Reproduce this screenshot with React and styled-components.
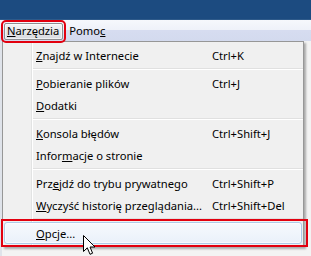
import React from "react";
import styled, {createGlobalStyle} from 'styled-components';

const GlobalStyle = createGlobalStyle`
    html, body {
        margin: 0;
        padding: 0;
        width: 311px;
        height: 256px;
        overflow: hidden;
        background: #eceef2;
    }
`;

const items = [
    [{label: 'Znajdź w Internecie', key: 0, shortcut: 'Ctrl+K'}],
    [
        {label: 'Pobieranie plików', key: 0, shortcut: 'Ctrl+J'},
        {label: 'Dodatki', key: 0},
    ],
    [
        {label: 'Konsola błędów', key: 0, shortcut: 'Ctrl+Shift+J'},
        {label: 'Informacje o stronie', key: 5},
    ],
    [
        {label: 'Przejdź do trybu prywatnego', key: 3, shortcut: 'Ctrl+Shift+P'},
        {label: 'Wyczyść historię przeglądania...', key: 0, shortcut: 'Ctrl+Shift+Del'},
    ],
    [{label: 'Opcje...', key: 0, hot: true}],
];

const Accel = ({text, at}) => (
    <>
        {text.slice(0, at)}
        <u>{text[at]}</u>
        {text.slice(at + 1)}
    </>
);

class App extends React.Component {
    render() {
        return (
            <Screen>
                <GlobalStyle/>
                <TitleBar/>
                <MenuBar>
                    <TopItem $open><Accel text="Narzędzia" at={0}/></TopItem>
                    <TopItem><Accel text="Pomoc" at={4}/></TopItem>
                </MenuBar>
                <Body>
                    <Popup>
                        {items.map((group, g) => (
                            <React.Fragment key={g}>
                                {g > 0 && <Separator/>}
                                {group.map(item => (
                                    <Row key={item.label} $hot={item.hot}>
                                        <span/>
                                        <Label><Accel text={item.label} at={item.key}/></Label>
                                        <Shortcut>{item.shortcut}</Shortcut>
                                    </Row>
                                ))}
                            </React.Fragment>
                        ))}
                    </Popup>
                    <Cursor viewBox="0 0 13 21" width="13" height="21">
                        <path d="M0.5 0.5 L0.5 16.5 L4.3 12.8 L7 19.3 L9.6 18.2 L7 12 L12 12 Z"
                              fill="#fff" stroke="#000" strokeWidth="1" strokeLinejoin="miter"/>
                    </Cursor>
                </Body>
            </Screen>
        );
    }
}

const Screen = styled.div`
    width: 311px;
    height: 256px;
    display: flex;
    flex-direction: column;
    font-family: "Noto Sans", "Open Sans", sans-serif;
    font-size: 11.2px;
    color: #000;
    position: relative;
`;

const TitleBar = styled.div`
    height: 20px;
    flex: none;
    background: #1c4b80;
    border-bottom: 1px solid #2e5a8a;
    box-sizing: border-box;
`;

const MenuBar = styled.div`
    height: 21px;
    flex: none;
    display: flex;
    align-items: center;
    gap: 3px;
    padding: 1px 0 0 4px;
    box-sizing: border-box;
    background: linear-gradient(to bottom, #f6f8fc 0, #eef1f9 50%, #d6dcf0 50%, #d3daee 100%);
    position: relative;
    z-index: 2;
`;

const TopItem = styled.div`
    height: 17px;
    display: flex;
    align-items: center;
    padding: 0 3px 0 2px;
    border: 1px solid transparent;
    border-radius: 2px;
    box-sizing: border-box;
    line-height: 1;
    white-space: nowrap;

    ${({$open}) => $open && `
        border-color: #8d8e92;
        background: linear-gradient(to bottom, #f4f4f5 0, #e6e7ea 50%, #d8dae0 100%);
        box-shadow: inset 0 0 0 1px rgba(255,255,255,0.6);
        outline: 2px solid #e2000f;
        outline-offset: 1px;
    `}
`;

const Body = styled.div`
    flex: 1;
    position: relative;
    padding-left: 2px;
    background: linear-gradient(to right, #dfe3ea 0, #dfe3ea 2px, #f3f3f3 2px);
`;

const Popup = styled.div`
    width: 302px;
    box-sizing: border-box;
    border: 1px solid #979797;
    padding: 2px 0;
    background:
        linear-gradient(to right, transparent 28px, #e2e3e3 28px, #e2e3e3 29px, #fff 29px, #fff 30px, transparent 30px),
        #f0f0f0;
    box-shadow: 2px 2px 2px rgba(0, 0, 0, 0.3);
`;

const Row = styled.div`
    height: 22px;
    margin: 0 1px;
    display: grid;
    grid-template-columns: 31px 176px 1fr;
    align-items: center;
    box-sizing: border-box;
    border: 1px solid transparent;
    border-radius: 3px;
    position: relative;
    white-space: nowrap;

    ${({$hot}) => $hot && `
        border-color: #aecbea;
        background: linear-gradient(to bottom, #f6f9fd 0, #eaf1fa 100%);
        box-shadow: inset 0 0 0 1px rgba(255,255,255,0.7);

        &::after {
            content: '';
            position: absolute;
            top: -4px;
            left: -4px;
            right: -7px;
            bottom: -4px;
            border: 2px solid #e2000f;
        }
    `}
`;

const Label = styled.span`
    overflow: hidden;
`;

const Shortcut = styled.span`
    padding-left: 0;
`;

const Separator = styled.div`
    margin: 2px 0 2px 30px;
    height: 0;
    border-top: 1px solid #e0e0e0;
    border-bottom: 1px solid #fff;
`;

const Cursor = styled.svg`
    position: absolute;
    left: 83px;
    top: 194px;
    z-index: 3;
`;

export default App;
